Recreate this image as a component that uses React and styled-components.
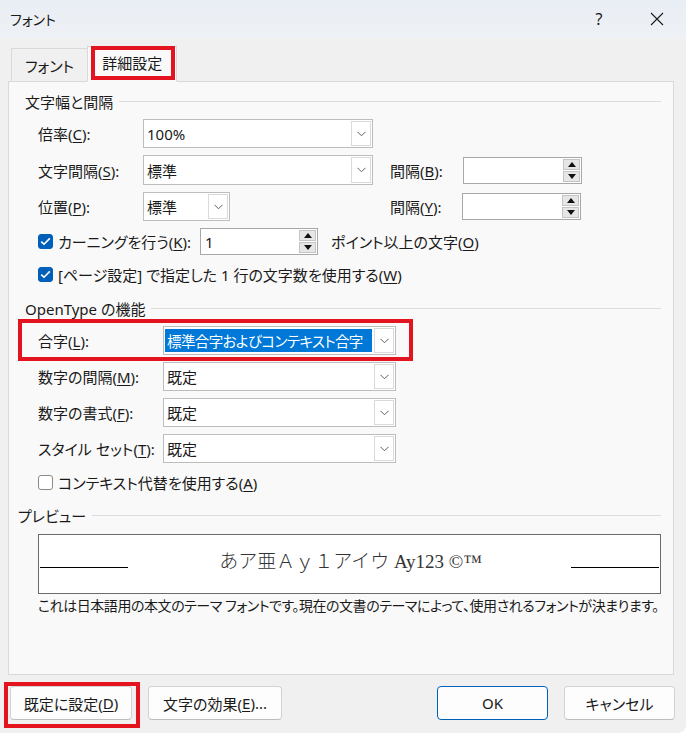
import { createGlobalStyle, styled } from "styled-components";

const GlobalStyle = createGlobalStyle`
  html, body { margin: 0; padding: 0; background: #ffffff; }
  body {
    font-family: "Noto Sans", "Noto Sans CJK JP", sans-serif;
    font-size: 15px;
    color: #1a1a1a;
  }
  u { text-underline-offset: 2px; }
`;

const RED = "#e3141f";

const Chevron = () => (
  <svg width="9" height="6" viewBox="0 0 9 6">
    <path d="M0.5 0.8 L4.5 4.8 L8.5 0.8" fill="none" stroke="#5f5f5f" strokeWidth="1" />
  </svg>
);

const Check = () => (
  <svg width="11" height="9" viewBox="0 0 11 9">
    <path d="M1.2 4.6 L4 7.2 L9.8 1.4" fill="none" stroke="#fff" strokeWidth="1.6" />
  </svg>
);

const Close = () => (
  <svg width="14" height="14" viewBox="0 0 14 14">
    <path d="M1 1 L13 13 M13 1 L1 13" stroke="#1a1a1a" strokeWidth="1.1" />
  </svg>
);

const Tri = ({ down }) => (
  <svg width="8" height="5" viewBox="0 0 8 5">
    <path d={down ? "M0 0 L8 0 L4 5 Z" : "M0 5 L8 5 L4 0 Z"} fill="#111" />
  </svg>
);

const Combo = ({ width, value, selected }) => (
  <ComboBox $width={width}>
    <ComboValue>
      <ComboText $selected={selected}>{value}</ComboText>
    </ComboValue>
    <ComboArrow>
      <Chevron />
    </ComboArrow>
  </ComboBox>
);

const Spinner = ({ width, value }) => (
  <SpinBox $width={width}>
    <SpinValue>{value}</SpinValue>
    <SpinButtons>
      <SpinButton>
        <Tri />
      </SpinButton>
      <SpinButton>
        <Tri down />
      </SpinButton>
    </SpinButtons>
  </SpinBox>
);

const CheckRow = ({ checked, children }) => (
  <CheckLine>
    <CheckBox $checked={checked}>{checked && <Check />}</CheckBox>
    <span>{children}</span>
  </CheckLine>
);

const App = () => {
  return (
    <>
      <GlobalStyle />
      <Window>
        <TitleBar>
          <Title>フォント</Title>
          <TitleButtons>
            <TitleButton>?</TitleButton>
            <TitleButton>
              <Close />
            </TitleButton>
          </TitleButtons>
        </TitleBar>

        <Tabs>
          <Tab>フォント</Tab>
          <Tab $active>
            <Marked>詳細設定</Marked>
          </Tab>
        </Tabs>

        <Panel>
          <GroupHeader>文字幅と間隔</GroupHeader>
          <Rows>
            <Row $h={29}>
              <Label $w={105}>
                倍率(<u>C</u>):
              </Label>
              <Combo width={230} value="100%" />
            </Row>
            <Row $h={30}>
              <Label $w={105}>
                文字間隔(<u>S</u>):
              </Label>
              <Combo width={230} value="標準" />
              <Label $w={73} $ml={17}>
                間隔(<u>B</u>):
              </Label>
              <Spinner width={119} value="" />
            </Row>
            <Row $h={29}>
              <Label $w={105}>
                位置(<u>P</u>):
              </Label>
              <Combo width={87} value="標準" />
              <Label $w={72} $ml={160}>
                間隔(<u>Y</u>):
              </Label>
              <Spinner width={119} value="" />
            </Row>
            <Row $h={27}>
              <CheckRow checked>
                カーニングを行う(<u>K</u>):
              </CheckRow>
              <Spinner width={118} value="1" />
              <Label $ml={13}>
                ポイント以上の文字(<u>O</u>)
              </Label>
            </Row>
            <Row $h={24}>
              <CheckRow checked>
                [ページ設定] で指定した 1 行の文字数を使用する(<u>W</u>)
              </CheckRow>
            </Row>
          </Rows>

          <GroupHeader $mt={12}>OpenType の機能</GroupHeader>
          <Rows>
            <Row $h={29} $marked>
              <Label $w={125}>
                合字(<u>L</u>):
              </Label>
              <Combo width={233} value="標準合字およびコンテキスト合字" selected />
            </Row>
            <Row $h={29}>
              <Label $w={125}>
                数字の間隔(<u>M</u>):
              </Label>
              <Combo width={233} value="既定" />
            </Row>
            <Row $h={29}>
              <Label $w={125}>
                数字の書式(<u>F</u>):
              </Label>
              <Combo width={233} value="既定" />
            </Row>
            <Row $h={29}>
              <Label $w={125}>
                スタイル セット(<u>T</u>):
              </Label>
              <Combo width={233} value="既定" />
            </Row>
            <Row $h={24}>
              <CheckRow>
                コンテキスト代替を使用する(<u>A</u>)
              </CheckRow>
            </Row>
          </Rows>

          <GroupHeader $mt={11} $indent={-7}>
            プレビュー
          </GroupHeader>
          <PreviewBox>
            <Baseline />
            <PreviewText>あア亜Ａｙ１アイウ Ay123 ©™</PreviewText>
            <Baseline />
          </PreviewBox>
          <Note>
            これは日本語用の本文のテーマ フォントです。現在の文書のテーマによって、使用されるフォントが決まります。
          </Note>
        </Panel>

        <Footer>
          <FooterGroup>
            <Button $w={122} $marked>
              既定に設定(<u>D</u>)
            </Button>
            <Button $w={134}>
              文字の効果(<u>E</u>)...
            </Button>
          </FooterGroup>
          <FooterGroup>
            <Button $w={111} $primary>
              OK
            </Button>
            <Button $w={111}>キャンセル</Button>
          </FooterGroup>
        </Footer>
      </Window>
    </>
  );
};

const Window = styled.div`
  width: 686px;
  height: 733px;
  box-sizing: border-box;
  background: #f0f0f0;
  border-bottom-right-radius: 8px;
  display: flex;
  flex-direction: column;
  overflow: hidden;
  font-feature-settings: "palt";
`;

const TitleBar = styled.div`
  height: 38px;
  flex-shrink: 0;
  display: flex;
  align-items: center;
  justify-content: space-between;
  padding-left: 10px;
  background: linear-gradient(#e9eef5, #eef1f5);
`;

const Title = styled.div`
  font-size: 14px;
`;

const TitleButtons = styled.div`
  display: flex;
  height: 100%;
`;

const TitleButton = styled.div`
  width: 58px;
  height: 100%;
  display: flex;
  align-items: center;
  justify-content: center;
  font-size: 16px;
`;

const Tabs = styled.div`
  display: flex;
  align-items: flex-end;
  height: 44px;
  padding-left: 11px;
  flex-shrink: 0;
  position: relative;
  z-index: 1;
  margin-bottom: -1px;
`;

const Tab = styled.div`
  box-sizing: border-box;
  height: ${(p) => (p.$active ? "36px" : "34px")};
  padding: 0 ${(p) => (p.$active ? "11px" : "13px")};
  display: flex;
  align-items: center;
  border: 1px solid #d9d9d9;
  border-bottom: ${(p) => (p.$active ? "1px solid #f9f9f9" : "1px solid #d9d9d9")};
  background: ${(p) => (p.$active ? "#f9f9f9" : "#f0f0f0")};
  margin-left: ${(p) => (p.$active ? "-1px" : "0")};
  ${(p) => (p.$active ? "padding-bottom: 3px;" : "padding-top: 1px;")}
`;

const Marked = styled.span`
  position: relative;
  padding: 0 3px;
  &::after {
    content: "";
    position: absolute;
    left: -8px;
    right: -10px;
    top: -6px;
    bottom: -7px;
    border: 4px solid ${RED};
  }
`;

const Panel = styled.div`
  box-sizing: border-box;
  margin: 0 12px 0 8px;
  height: 594px;
  flex-shrink: 0;
  background: #f9f9f9;
  border: 1px solid #d9d9d9;
  padding: 9px 12px 0 16px;
  display: flex;
  flex-direction: column;
`;

const GroupHeader = styled.div`
  display: flex;
  align-items: center;
  gap: 6px;
  height: 20px;
  margin-top: ${(p) => p.$mt || 0}px;
  margin-left: ${(p) => p.$indent || 0}px;
  &::after {
    content: "";
    flex: 1;
    height: 1px;
    background: #dcdcdc;
  }
`;

const Rows = styled.div`
  display: flex;
  flex-direction: column;
  gap: 7px;
  padding-left: 13px;
  margin-top: 8px;
`;

const Row = styled.div`
  display: flex;
  align-items: center;
  height: ${(p) => p.$h}px;
  position: relative;
  ${(p) =>
    p.$marked &&
    `
    width: 358px;
    &::after {
      content: "";
      position: absolute;
      left: -20px;
      right: -17px;
      top: -7px;
      bottom: -6px;
      border: 4px solid ${RED};
      pointer-events: none;
    }
  `}
`;

const Label = styled.div`
  width: ${(p) => (p.$w ? `${p.$w}px` : "auto")};
  margin-left: ${(p) => p.$ml || 0}px;
  flex-shrink: 0;
  white-space: nowrap;
`;

const ComboBox = styled.div`
  box-sizing: border-box;
  width: ${(p) => p.$width}px;
  height: 100%;
  display: flex;
  background: #ffffff;
  border: 1px solid #bdbdbd;
  flex-shrink: 0;
`;

const ComboValue = styled.div`
  flex: 1;
  min-width: 0;
  display: flex;
  align-items: center;
  padding: 0 1px;
  overflow: hidden;
`;

const ComboText = styled.span`
  display: flex;
  align-items: center;
  height: 23px;
  padding: 0 2px;
  white-space: nowrap;
  ${(p) =>
    p.$selected
      ? "background: #0078d7; color: #ffffff; flex: 1; letter-spacing: -0.6px; font-size: 14.5px;"
      : ""}
`;

const ComboArrow = styled.div`
  box-sizing: border-box;
  width: 20px;
  flex-shrink: 0;
  margin: 1px;
  border: 1px solid #dadada;
  display: flex;
  align-items: center;
  justify-content: center;
  background: #ffffff;
`;

const SpinBox = styled.div`
  box-sizing: border-box;
  width: ${(p) => p.$width}px;
  height: 27px;
  display: flex;
  background: #ffffff;
  border: 1px solid #a8a8a8;
  flex-shrink: 0;
`;

const SpinValue = styled.div`
  flex: 1;
  display: flex;
  align-items: center;
  padding-left: 4px;
`;

const SpinButtons = styled.div`
  width: 17px;
  margin: 1px;
  display: flex;
  flex-direction: column;
  gap: 1px;
`;

const SpinButton = styled.div`
  flex: 1;
  background: #e6e6e6;
  border: 1px solid #c4c4c4;
  display: flex;
  align-items: center;
  justify-content: center;
`;

const CheckLine = styled.div`
  display: flex;
  align-items: center;
  gap: 5px;
  margin-right: 9px;
  white-space: nowrap;
`;

const CheckBox = styled.div`
  box-sizing: border-box;
  width: 15px;
  height: 15px;
  border-radius: 3px;
  display: flex;
  align-items: center;
  justify-content: center;
  background: ${(p) => (p.$checked ? "#005fb8" : "#ffffff")};
  border: 1px solid ${(p) => (p.$checked ? "#005fb8" : "#8a8a8a")};
`;

const PreviewBox = styled.div`
  box-sizing: border-box;
  margin: 9px 0 0 13px;
  height: 60px;
  border: 1px solid #6b6b6b;
  background: #ffffff;
  display: flex;
  align-items: baseline;
  justify-content: space-between;
  padding: 11px 1px 0 1px;
`;

const Baseline = styled.div`
  width: 88px;
  height: 1px;
  background: #000000;
`;

const PreviewText = styled.div`
  font-family: "Liberation Serif", "Noto Sans CJK JP", serif;
  font-size: 19px;
  font-weight: 300;
  color: #333333;
  font-feature-settings: normal;
  margin-left: 2px;
`;

const Note = styled.div`
  margin: 1px 0 0 13px;
  font-size: 14px;
  white-space: nowrap;
  letter-spacing: -0.45px;
`;

const Footer = styled.div`
  display: flex;
  justify-content: space-between;
  padding: 11px 11px 0 10px;
`;

const FooterGroup = styled.div`
  display: flex;
  gap: 16px;
`;

const Button = styled.div`
  box-sizing: border-box;
  position: relative;
  width: ${(p) => p.$w}px;
  height: 34px;
  display: flex;
  align-items: center;
  justify-content: center;
  border-radius: 4px;
  background: #fdfdfd;
  border: 1px solid ${(p) => (p.$primary ? "#005fb8" : "#d2d2d2")};
  border-bottom-color: ${(p) => (p.$primary ? "#005fb8" : "#bdbdbd")};
  ${(p) =>
    p.$marked &&
    `
    &::after {
      content: "";
      position: absolute;
      left: -7px;
      right: -9px;
      top: -5px;
      bottom: -9px;
      border: 4px solid ${RED};
    }
  `}
`;

export default App;
